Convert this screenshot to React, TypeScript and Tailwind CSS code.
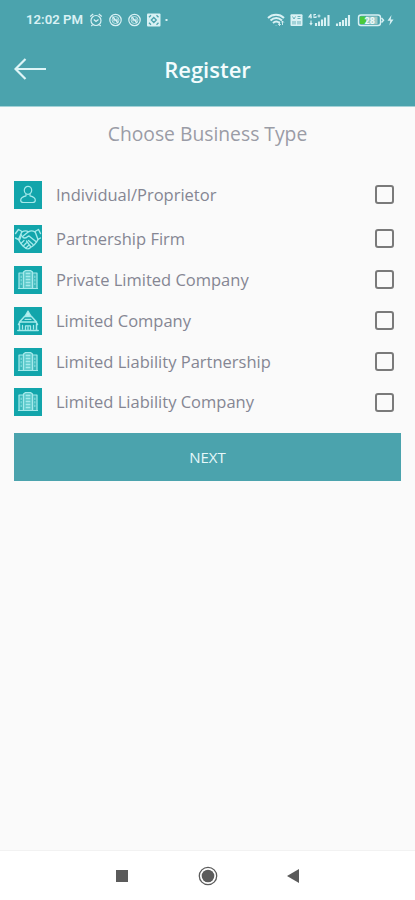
import { useState } from 'react';

type IconName = 'person' | 'handshake' | 'building' | 'office';

const businessTypes: { label: string; icon: IconName; row: string }[] = [
  { label: 'Individual/Proprietor', icon: 'person', row: 'h-[47px]' },
  { label: 'Partnership Firm', icon: 'handshake', row: 'h-[41px]' },
  { label: 'Private Limited Company', icon: 'building', row: 'h-[41px]' },
  { label: 'Limited Company', icon: 'office', row: 'h-[41px]' },
  { label: 'Limited Liability Partnership', icon: 'building', row: 'h-[41px]' },
  { label: 'Limited Liability Company', icon: 'building', row: 'h-[40px]' },
];

function TypeIcon({ name }: { name: IconName }) {
  return (
    <svg
      viewBox="0 0 28 28"
      className="block h-7 w-7 shrink-0 bg-[#12a5ab]"
      fill="none"
      stroke="#a5eaeb"
      strokeWidth="1.2"
      strokeLinecap="round"
      strokeLinejoin="round"
    >
      {name === 'person' && (
        <>
          <ellipse cx="14" cy="9.3" rx="3.7" ry="4" />
          <path d="M12 13v1.8c-3.200.8-5.300 2.200-5.300 4.400 0 1.700 1.200 2.300 2.800 2.300h9c1.600 0 2.800-.6 2.800-2.300 0-2.200-2.100-3.600-5.300-4.400V13" />
        </>
      )}
      {name === 'handshake' && (
        <>
          <path d="M1.500 8.500L4.500 4.500l3.500 2-3.500 8-3-1.500M26.500 8.500l-2-4-3.500 2 3 8 2.500-1.500" strokeWidth="1.400" />
          <path d="M8 6.800c3-1.500 4.500-1.300 6.500 0 2-1.300 4-1.300 6.500 0M14.500 6.800L8.500 11.500c.5 2 3 2 5 .2l1.500-.7 7.500 6" strokeWidth="1.400" />
          <path d="M4.500 14.500c2 4 5 7.500 8 9 1.500.8 3 0 4-1 2.800-1.500 5.500-4 7.500-8M7.500 10l-2 5" strokeWidth="1.400" />
          <path d="M7 18.500l3-3M9.300 21l3-3M12 23l2.500-2.500M14.500 15.500l4.500 4M12.500 16l4 5.500" strokeWidth="1.300" />
        </>
      )}
      {name === 'building' && (
        <>
          <path d="M5 7h4.500v15.500H5zM18.500 7H23v15.500h-4.500z" fill="#3cb9bc" />
          <path d="M9.500 22.500V6l2-1.500h5l2 1.500v16.500z" fill="#60cbcd" />
          <path d="M12.300 7.500h3.400M12.300 10.500h3.400M12.300 13.500h3.400M12.300 16.500h3.400M12.300 19.500h3.400" strokeWidth="1.300" />
          <path d="M7.200 10v10M20.800 10v10" stroke="#82dcdd" strokeDasharray="1.500 2" />
          <path d="M4.500 22.500h19" />
        </>
      )}
      {name === 'office' && (
        <>
          <path d="M14 4l-3 5h6z" fill="#b9f0f0" />
          <path d="M10.500 9.500L5.500 15h17l-5-5.500zM4.500 17.500l1.500-2.500h16l1.500 2.500M5.500 17.500v6M22.500 17.500v6M3.800 23.500h20.400" strokeWidth="1.500" />
          <path d="M11.500 23v-4.200h5V23M8.500 18.500V22M19.500 18.500V22M14 20v3M11 12.300h6" strokeWidth="1.300" />
        </>
      )}
    </svg>
  );
}

function StatusBar() {
  return (
    <div className="flex h-[39px] items-center text-[#d9f1f4]">
      <span className="ml-[26px] w-[57px] whitespace-nowrap font-[Roboto] text-[13.2px] leading-4 font-semibold">
        12:02 PM
      </span>
      <svg viewBox="0 0 80 16" className="ml-[6px] h-4 w-20" fill="none" stroke="currentColor" strokeWidth="1.2">
        <circle cx="7" cy="8.5" r="5" />
        <path d="M1.2 4.5l3-2.5M12.8 4.5l-3-2.5M3.5 12.8L2.3 14M10.5 12.8l1.2 1.2M4.800 7.500L7 9.500l2.500-2" />
        {[26.5, 45.5].map((x) => (
          <g key={x}>
            <circle cx={x} cy="8" r="5.7" />
            <circle cx={x} cy="8" r="3.5" strokeWidth=".8" />
            <path d={`M${x - 3} 4.5l5.5 6.5M${x - 1.5} 9.5V6M${x + 1.5} 10V6.5`} />
          </g>
        ))}
        <rect x="58" y="1.5" width="13.5" height="13" rx="1" fill="currentColor" stroke="none" />
        <path
          d="M62 3.3L60 5.3M67.5 3.3l2 2M60 10.7l2 2M69.5 10.7l-2 2M64.800 5.500l2.500 2.500-2.500 2.500-2.500-2.500z"
          stroke="#4ba3ad"
          strokeWidth="1.3"
        />
        <rect x="76.5" y="7" width="2" height="2" fill="currentColor" stroke="none" />
      </svg>
      <svg viewBox="0 0 130 16" className="ml-auto mr-[18px] h-4 w-[130px]" fill="none" stroke="currentColor" strokeWidth="1.3">
        <path d="M1 6c4.500-4.200 11.500-4.200 16 0M3.500 8.500c3.500-3.200 8-3.200 11.500 0M6 11c2-1.800 4.500-1.800 6.500 0M9.200 13.300v.1" strokeWidth="2" />
        <path d="M12.500 9.500v4M11.200 12l1.300 1.500 1.300-1.500M15.500 13v-4M14.200 10.500l1.300-1.500 1.300 1.500" strokeWidth=".9" />
        <rect x="23.5" y="2.3" width="12" height="11.8" rx="1" fill="currentColor" stroke="none" />
        <path
          d="M25.500 4.500l1.500 2.500 1.500-2.500M30.500 4.500h3M30.500 6.500h3M26 9v3.500M28 9v3.500M31 9v3.500M33 9v3.500"
          stroke="#4ba3ad"
          strokeWidth=".8"
        />
        <path d="M44 2l-2 3h3M44 2v4.500M49 2.500h-2v3h2V4M50.500 4h3M52 2.500v3M44 8.500v4M42.800 11l1.200 1.500 1.200-1.500" strokeWidth="1.1" />
        <path d="M49 14v-3M52 14V9.500M55 14V7.500M58 14V5.500M61.500 14V3" strokeWidth="2.1" />
        <path d="M70 14v-2.500M73 14v-4M76 14V8M79 14V6M82 14V3" strokeWidth="2.1" />
        <rect x="91.5" y="3" width="22" height="10.5" rx="2.5" strokeWidth="1.4" />
        <rect x="93" y="4.5" width="6" height="7.5" fill="#4ac93a" stroke="none" />
        <rect x="99" y="4.5" width="11.5" height="7.5" fill="#9fc9c7" stroke="none" />
        <path d="M114.500 6l2 2.300-2 2.300" strokeWidth="1.5" />
        <text x="97.5" y="11.6" fontSize="9" fontFamily="Roboto, sans-serif" fontWeight="700" fill="#effbfa" stroke="none">
          28
        </text>
        <path d="M124.500 3l-4 5.800h2.800l-1 4.700 4.200-6h-2.800z" fill="currentColor" stroke="none" />
      </svg>
    </div>
  );
}

export default function App() {
  const [selected, setSelected] = useState<string[]>([]);

  const toggle = (label: string) => {
    setSelected((prev) =>
      prev.includes(label) ? prev.filter((item) => item !== label) : [...prev, label]
    );
  };

  return (
    <div className="flex h-[900px] w-full flex-col overflow-hidden bg-[#fafafa] font-['Open_Sans','Noto_Sans',sans-serif]">
      <header className="h-[107px] shrink-0 border-b border-[#a4d2d7] bg-[#4ba3ad]">
        <StatusBar />
        <div className="grid h-[60px] grid-cols-[60px_1fr_60px] items-center">
          <button aria-label="Back" className="pl-[14px]">
            <svg viewBox="0 0 32 24" className="block h-6 w-8" fill="none" stroke="#dff5f7" strokeWidth="2.2">
              <path d="M11.500 2L1.500 12l10 10M1.500 12H32" />
            </svg>
          </button>
          <h1 className="pb-px text-center text-[22px] leading-7 font-semibold text-[#f4fcfd]">Register</h1>
        </div>
      </header>

      <main className="flex-1 px-[14px]">
        <h2 className="mt-[13px] text-center text-[19.3px] leading-7 text-[#9a9ca6]">Choose Business Type</h2>

        <div className="mt-[23px]">
          {businessTypes.map(({ label, icon, row }) => (
            <label key={label} className={`flex items-center ${row}`}>
              <TypeIcon name={icon} />
              <span className="ml-[14px] flex-1 whitespace-nowrap text-[16.5px] leading-6 text-[#858693]">{label}</span>
              <input
                type="checkbox"
                checked={selected.includes(label)}
                onChange={() => toggle(label)}
                className="mr-[7px] h-[19px] w-[19px] appearance-none rounded-[3px] border-2 border-[#7a7a7a] checked:bg-[#4ba3ad]"
              />
            </label>
          ))}
        </div>

        <button className="mt-[11px] block h-[48px] w-[387px] bg-[#4ba3ad] text-[15px] text-[#e6f8fa]">NEXT</button>
      </main>

      <nav className="flex h-[50px] shrink-0 items-center border-t border-[#f2f2f2] bg-white text-[#5b5b5b]">
        <div className="ml-[116px] h-3 w-3 bg-current" />
        <svg viewBox="0 0 20 20" className="ml-[70px] h-5 w-5">
          <circle cx="10" cy="10" r="8.7" fill="none" stroke="currentColor" strokeWidth="1.3" />
          <circle cx="10" cy="10" r="6.3" fill="currentColor" />
        </svg>
        <svg viewBox="0 0 12 14" className="ml-[69px] h-[14px] w-3" fill="currentColor">
          <path d="M0 7L12 0v14z" />
        </svg>
      </nav>
    </div>
  );
}
